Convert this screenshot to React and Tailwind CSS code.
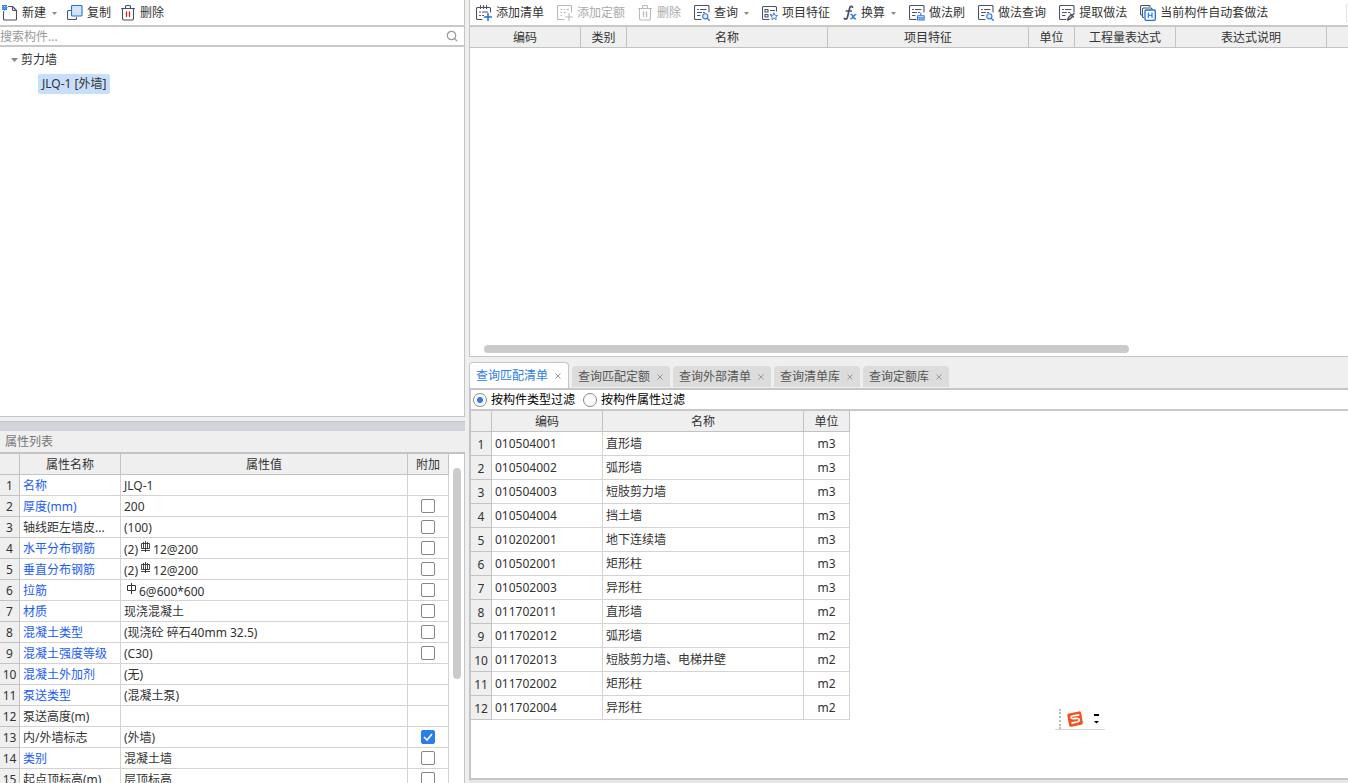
import { useState } from 'react';
import clsx from 'clsx';

const INK = '#4a5068';
const BLUE = '#2b7de9';

function Svg({ width = 16, children, className }) {
  return (
    <svg width={width} height="16" viewBox={`0 0 ${width} 16`} fill="none" stroke={INK} strokeWidth="1.1" strokeLinecap="round" strokeLinejoin="round" className={clsx('shrink-0', className)} aria-hidden="true">
      {children}
    </svg>
  );
}

function NewIcon() {
  return (
    <Svg>
      <path d="M6.500 1.500h4l4 4v8.500a1 1 0 0 1-1 1H2.500a1 1 0 0 1-1-1V6.500M10.500 1.500v3a1 1 0 0 0 1 1h3" />
      <path d="M.5.5l4 4M4.500.5l-4 4M2.500 0l2.500 2.500-2.500 2.500L0 2.500z" stroke={BLUE} />
    </Svg>
  );
}

function CopyIcon() {
  return (
    <Svg>
      <path d="M3.500 5.500h-2a1 1 0 0 0-1 1v7a1 1 0 0 0 1 1h7a1 1 0 0 0 1-1v-1" />
      <rect x="4.500" y=".5" width="10.500" height="10.500" rx="1" fill="#d3e4fb" stroke="#2672d8" />
    </Svg>
  );
}

function TrashIcon({ muted }) {
  return (
    <Svg width={15}>
      <path d="M.5 3.500h13M4.500 3.500v-2a1 1 0 0 1 1-1h3a1 1 0 0 1 1 1v2M1.500 3.500v10a1.500 1.500 0 0 0 1.500 1.500h8a1.500 1.500 0 0 0 1.500-1.500v-10" />
      <path d="M5.500 7v4.500M8.500 7v4.500" stroke={muted ? INK : '#d8232f'} strokeWidth="1.300" />
    </Svg>
  );
}

function AddListIcon() {
  return (
    <Svg>
      <path d="M6 14.500H1.500a1 1 0 0 1-1-1v-10a1 1 0 0 1 1-1h12a1 1 0 0 1 1 1V7M4.500.5v3M7.500.5v3M10.500.5v3M3.500 7h1M6.500 7h5M3.500 10.500h1M6.500 10.500h1" />
      <path d="M12 8.500v7M8.500 12h7" stroke="#1273dd" strokeWidth="1.500" />
    </Svg>
  );
}

function AddQuotaIcon() {
  return (
    <Svg>
      <path d="M7 14.500H1.500a1 1 0 0 1-1-1v-12a1 1 0 0 1 1-1h12a1 1 0 0 1 1 1V7" />
      <path d="M4 4.500h.5M7 4.500h.5M10 4.500h1.500M4 7.500h.5M7 7.500h1.500M4 10.500h.5M12 8.500v7M8.500 12h7" />
    </Svg>
  );
}

// shared sheet outline, the badge in the corner tells the commands apart
function Sheet({ children }) {
  return (
    <Svg>
      <path d="M7 14.500H1.500a1 1 0 0 1-1-1v-12a1 1 0 0 1 1-1h12.500a1 1 0 0 1 1 1V7" />
      <path d="M3.500 4.500h1M6.500 4.500h5.500M3.500 7.500h4M9.500 7.500h1M3.500 10.500h2.500" />
      {children}
    </Svg>
  );
}

function SheetSearchIcon() {
  return (
    <Sheet>
      <g stroke={BLUE}>
        <circle cx="11.300" cy="11.300" r="2.600" fill="#e3effd" />
        <path d="M13.400 13.400l1.900 1.900" strokeWidth="1.400" />
      </g>
    </Sheet>
  );
}

function SheetBrushIcon() {
  return (
    <Sheet>
      <path d="M11.800 8v2.500M8.500 10.700h6.700M8.500 12.800h6.700M8.500 10.700v4.300h6.700v-4.300M10.800 13v2M13 13v2" stroke={BLUE} />
    </Sheet>
  );
}

function SheetPickIcon() {
  return (
    <Sheet>
      <path d="M8.500 15l1-2.500 2.500-2.500 1.500 1.500-2.500 2.500zM11.500 9l3 3M13 10.500l2-2" strokeWidth="1.400" />
    </Sheet>
  );
}

function FeatureIcon() {
  return (
    <Svg>
      <path d="M14.500 6V2.500a1 1 0 0 0-1-1h-12a1 1 0 0 0-1 1v11a1 1 0 0 0 1 1H7" />
      <path d="M3 4.500h3v2.500H3zM3 9.500h3v2.500H3zM8.500 5.500h4M8.500 9.500h.5" />
      <path d="M12 8l1.100 2.200 2.400.3-1.700 1.700.4 2.400L12 13.500l-2.200 1.100.4-2.400-1.700-1.700 2.400-.3z" stroke={BLUE} fill="#e3effd" strokeWidth=".9" />
    </Svg>
  );
}

function FxIcon() {
  return (
    <Svg width={14}>
      <path d="M9.500 2.300C8.700.8 7.100 1 6.600 3.200L4.500 12c-.5 2.200-2 2.600-3.200 1.500M3.300 6h5" strokeWidth="1.700" />
      <path d="M8 9.500c2-.8 2 4.800 4.500 4.300M12.700 9.500c-1.700 0-2.800 4.300-4.900 4.300" stroke={BLUE} strokeWidth="1.500" />
    </Svg>
  );
}

function AutoIcon() {
  return (
    <Svg>
      <path d="M1.500 10a1 1 0 0 1-1-1V1.500a1 1 0 0 1 1-1H9a1 1 0 0 1 1 1" />
      <path d="M3.500 12.500a1 1 0 0 1-1-1V4a1 1 0 0 1 1-1H11a1 1 0 0 1 1 1" />
      <rect x="5" y="5" width="10.300" height="10.300" rx="1" fill="#fff" stroke="#1273dd" strokeWidth="1.300" />
      <path d="M8.300 8v4.500M12 8v4.500M8.300 10.200h3.700" stroke="#1273dd" />
    </Svg>
  );
}

function Caret({ className }) {
  return (
    <svg width="5" height="3" viewBox="0 0 5 3" className={clsx('shrink-0', className)} aria-hidden="true">
      <path d="M0 0h5L2.500 3z" fill="#8a8a8a" />
    </svg>
  );
}

// steel grade mark drawn in front of the bar diameter
function RebarMark({ grade }) {
  return (
    <svg width="11" height="12" viewBox="0 0 11 12" fill="none" stroke="#333" className="mx-0.5 inline-block align-[1px]" role="img" aria-label={grade === 3 ? 'HRB400' : 'HPB300'}>
      {grade === 3 ? (
        <path d="M1.500 2.500h8v5h-8zM5.500 0v11M3.500 1v7M7.500 1v7M1 9.500h9" strokeWidth=".9" />
      ) : (
        <path d="M1.500 2.500h8v5h-8zM5.500 0v11" />
      )}
    </svg>
  );
}

function ToolButton({ icon, label, menu, disabled }) {
  return (
    <button
      type="button"
      disabled={disabled}
      className="flex shrink-0 items-center gap-1 whitespace-nowrap text-[#333] disabled:text-[#aaa] disabled:[&_svg]:opacity-40"
    >
      {icon}
      {label}
      {menu && <Caret className="ml-0.5" />}
    </button>
  );
}

function HeadCell({ children }) {
  return <th scope="col" className="h-[21px] border-r border-b border-[#c3c3c3] bg-[#efefef] p-0 pt-0.5 text-center font-normal">{children}</th>;
}

function CheckBox({ label, value, onChange }) {
  return (
    <span className="mx-auto grid size-3.5 place-items-center">
      <input
        type="checkbox"
        aria-label={label}
        checked={value}
        onChange={onChange}
        className="col-start-1 row-start-1 size-3.5 appearance-none rounded-xs border border-[#868686] bg-white checked:border-[#2b7de9] checked:bg-[#2b7de9]"
      />
      {value && (
        <svg width="10" height="10" viewBox="0 0 10 10" className="pointer-events-none col-start-1 row-start-1" aria-hidden="true">
          <path d="M1 5l3 3 5-6" fill="none" stroke="#fff" strokeWidth="1.600" />
        </svg>
      )}
    </span>
  );
}

// attach: undefined = the cell has no check box
const PROPERTIES = [
  { name: '名称', value: 'JLQ-1', blue: true },
  { name: '厚度(mm)', value: '200', blue: true, attach: false },
  { name: '轴线距左墙皮...', value: '(100)', attach: false },
  { name: '水平分布钢筋', prefix: '(2)', grade: 3, value: '12@200', blue: true, attach: false },
  { name: '垂直分布钢筋', prefix: '(2)', grade: 3, value: '12@200', blue: true, attach: false },
  { name: '拉筋', grade: 1, value: '6@600*600', blue: true, attach: false },
  { name: '材质', value: '现浇混凝土', blue: true, attach: false },
  { name: '混凝土类型', value: '(现浇砼 碎石40mm 32.5)', blue: true, attach: false },
  { name: '混凝土强度等级', value: '(C30)', blue: true, attach: false },
  { name: '混凝土外加剂', value: '(无)', blue: true },
  { name: '泵送类型', value: '(混凝土泵)', blue: true },
  { name: '泵送高度(m)', value: '' },
  { name: '内/外墙标志', value: '(外墙)', attach: true },
  { name: '类别', value: '混凝土墙', blue: true, attach: false },
  { name: '起点顶标高(m)', value: '层顶标高', attach: false },
];

const ITEMS = [
  ['010504001', '直形墙', 'm3'],
  ['010504002', '弧形墙', 'm3'],
  ['010504003', '短肢剪力墙', 'm3'],
  ['010504004', '挡土墙', 'm3'],
  ['010202001', '地下连续墙', 'm3'],
  ['010502001', '矩形柱', 'm3'],
  ['010502003', '异形柱', 'm3'],
  ['011702011', '直形墙', 'm2'],
  ['011702012', '弧形墙', 'm2'],
  ['011702013', '短肢剪力墙、电梯井壁', 'm2'],
  ['011702002', '矩形柱', 'm2'],
  ['011702004', '异形柱', 'm2'],
];

const TABS = ['查询匹配清单', '查询匹配定额', '查询外部清单', '查询清单库', '查询定额库'];
const FILTERS = ['按构件类型过滤', '按构件属性过滤'];

function ComponentPanel() {
  return (
    <section className="flex min-h-0 grow-[416] basis-0 flex-col border-r border-b border-[#c5c5c5] bg-white">
      <div className="flex h-[25px] shrink-0 items-center gap-2.5 pt-px pl-0.5">
        <ToolButton icon={<NewIcon />} label="新建" menu />
        <ToolButton icon={<CopyIcon />} label="复制" />
        <ToolButton icon={<TrashIcon />} label="删除" />
      </div>
      <div className="flex h-[22px] shrink-0 items-center border-y-2 border-[#c8c8c8] pr-1.5">
        <input
          type="text"
          aria-label="搜索构件"
          placeholder="搜索构件..."
          className="h-[18px] min-w-0 flex-1 text-xs outline-none placeholder:text-[#999]"
        />
        <svg width="12" height="12" viewBox="0 0 12 12" fill="none" stroke="#999" strokeWidth="1.200" aria-hidden="true">
          <circle cx="5.500" cy="5.500" r="4.200" />
          <path d="M8.500 8.500l2.500 2.500" />
        </svg>
      </div>
      <ul className="flex-1 pt-px">
        <li>
          <div className="flex h-6 items-center gap-[3px] pl-[11px]">
            <svg width="7" height="4" viewBox="0 0 7 4" aria-hidden="true"><path d="M0 0h7L3.500 4z" fill="#868686" /></svg>
            剪力墙
          </div>
          <ul className="pl-[38px]">
            <li className="flex h-6 items-center">
              <button type="button" className="h-5 rounded-xs bg-[#c7dffb] px-1">JLQ-1 [外墙]</button>
            </li>
          </ul>
        </li>
      </ul>
    </section>
  );
}

function PropertyPanel() {
  const [rows, setRows] = useState(PROPERTIES);

  const toggle = (index) => {
    setRows(rows.map((row, i) => (i === index ? { ...row, attach: !row.attach } : row)));
  };

  return (
    <section className="flex min-h-0 grow-[362] basis-0 flex-col overflow-hidden pt-1">
      <div className="h-2.5 shrink-0 border-t border-[#c5c5c9] bg-[#d3d4da]" />
      <h2 className="h-[23px] shrink-0 border-b-2 border-[#c3c3c7] pl-[5px] leading-[21px] text-[#777]">属性列表</h2>
      <div className="flex min-h-0 flex-1 overflow-hidden border-r border-[#c5c5c5] bg-white">
        <div className="min-w-0 flex-1">
          <table className="w-full table-fixed border-separate border-spacing-0">
            <colgroup>
              <col className="w-5" />
              <col className="w-[101px]" />
              <col />
              <col className="w-[41px]" />
            </colgroup>
            <thead>
              <tr>
                <HeadCell />
                <HeadCell>属性名称</HeadCell>
                <HeadCell>属性值</HeadCell>
                <HeadCell>附加</HeadCell>
              </tr>
            </thead>
            <tbody>
              {rows.map((row, i) => (
                <tr key={row.name}>
                  <th scope="row" className="h-[21px] border-r border-b border-[#c3c3c3] bg-[#efefef] p-0 pt-0.5 text-center font-normal">{i + 1}</th>
                  <td className={clsx('truncate border-r border-b border-[#d3d3d3] p-0 pt-0.5 pl-[3px]', row.blue && 'text-[#1a5cf5]')}>{row.name}</td>
                  <td className="truncate border-r border-b border-[#d3d3d3] p-0 pt-0.5 pl-[3px]">
                    {row.prefix}
                    {row.grade && <RebarMark grade={row.grade} />}
                    {row.value}
                  </td>
                  <td className="border-r border-b border-[#d3d3d3] p-0">
                    {row.attach !== undefined && (
                      <CheckBox label={`附加 ${row.name}`} value={row.attach} onChange={() => toggle(i)} />
                    )}
                  </td>
                </tr>
              ))}
            </tbody>
          </table>
        </div>
        <div className="w-[15px] shrink-0 pt-3.5 pl-1">
          <div className="h-[211px] w-2 rounded-full bg-[#cbcbcb]" />
        </div>
      </div>
    </section>
  );
}

function MethodPanel() {
  return (
    <section className="flex min-h-0 flex-1 flex-col border-b border-l border-[#c5c5c5] bg-white">
      <div className="flex h-[25px] shrink-0 items-center gap-[13px] overflow-hidden pt-px pl-1.5">
        <ToolButton icon={<AddListIcon />} label="添加清单" />
        <ToolButton icon={<AddQuotaIcon />} label="添加定额" disabled />
        <ToolButton icon={<TrashIcon muted />} label="删除" disabled />
        <ToolButton icon={<SheetSearchIcon />} label="查询" menu />
        <ToolButton icon={<FeatureIcon />} label="项目特征" />
        <ToolButton icon={<FxIcon />} label="换算" menu />
        <ToolButton icon={<SheetBrushIcon />} label="做法刷" />
        <ToolButton icon={<SheetSearchIcon />} label="做法查询" />
        <ToolButton icon={<SheetPickIcon />} label="提取做法" />
        <ToolButton icon={<AutoIcon />} label="当前构件自动套做法" />
        <span className="ml-auto h-[18px] w-0.5 rounded-l-xs border-y border-l border-[#e4e4e4]" />
      </div>
      <table className="w-full table-fixed border-separate border-spacing-0 border-t-2 border-[#c8c8c8]">
        <colgroup>
          <col className="w-[111px]" />
          <col className="w-[46px]" />
          <col className="w-[201px]" />
          <col className="w-[201px]" />
          <col className="w-[46px]" />
          <col className="w-[101px]" />
          <col className="w-[151px]" />
          <col />
        </colgroup>
        <thead>
          <tr>
            <HeadCell>编码</HeadCell>
            <HeadCell>类别</HeadCell>
            <HeadCell>名称</HeadCell>
            <HeadCell>项目特征</HeadCell>
            <HeadCell>单位</HeadCell>
            <HeadCell>工程量表达式</HeadCell>
            <HeadCell>表达式说明</HeadCell>
            <th className="border-b border-[#c3c3c3] bg-[#efefef] p-0" />
          </tr>
        </thead>
      </table>
      <div className="mt-auto pb-[3px] pl-3.5">
        <div className="h-2 w-[645px] max-w-full rounded-full bg-[#cbcbcb]" />
      </div>
    </section>
  );
}

function QueryPanel() {
  const [tab, setTab] = useState(TABS[0]);
  const [filter, setFilter] = useState(FILTERS[0]);

  return (
    <section className="shrink-0 pt-[5px]">
      <div className="flex h-[26px] items-end gap-[3px]" role="tablist">
        {TABS.map((name) => (
          <div
            key={name}
            className={clsx(
              'flex items-center gap-1.5 rounded-t px-1.5',
              name === tab ? 'h-[26px] border border-b-0 border-[#c3c5cb] bg-white pt-px text-[#2b7de9]' : 'mb-px h-[21px] bg-[#dcdcdc] text-[#555]'
            )}
          >
            <button type="button" role="tab" aria-selected={name === tab} onClick={() => setTab(name)}>{name}</button>
            <button type="button" aria-label={`关闭 ${name}`} className="flex size-2 items-center justify-center">
              <svg width="6" height="6" viewBox="0 0 6 6" stroke="#999" aria-hidden="true"><path d="M.5.5l5 5M5.500.5l-5 5" /></svg>
            </button>
          </div>
        ))}
      </div>
      <div className="border-y-2 border-l-2 border-[#c3c5c7] bg-white pb-[58px]">
        <div className="flex h-[21px] items-center gap-2 border-b-2 border-[#c8c8c8] pl-0.5 text-black">
          {FILTERS.map((name) => (
            <label key={name} className="flex items-center gap-1">
              <input
                type="radio"
                name="filter"
                checked={filter === name}
                onChange={() => setFilter(name)}
                className="grid size-3.5 appearance-none place-items-center rounded-full border border-[#868686] bg-white checked:before:size-1.5 checked:before:rounded-full checked:before:bg-[#2b7de9]"
              />
              {name}
            </label>
          ))}
        </div>
        <table className="table-fixed border-separate border-spacing-0">
          <colgroup>
            <col className="w-[21px]" />
            <col className="w-[111px]" />
            <col className="w-[201px]" />
            <col className="w-[46px]" />
          </colgroup>
          <thead>
            <tr>
              <HeadCell />
              <HeadCell>编码</HeadCell>
              <HeadCell>名称</HeadCell>
              <HeadCell>单位</HeadCell>
            </tr>
          </thead>
          <tbody>
            {ITEMS.map(([code, name, unit], i) => (
              <tr key={code}>
                <th scope="row" className="h-6 border-r border-b border-[#c3c3c3] bg-[#efefef] p-0 pt-0.5 text-center font-normal">{i + 1}</th>
                <td className="border-r border-b border-[#d3d3d3] p-0 pl-[3px]">{code}</td>
                <td className="border-r border-b border-[#d3d3d3] p-0 pl-[3px]">{name}</td>
                <td className="border-r border-b border-[#d3d3d3] p-0 text-center">{unit}</td>
              </tr>
            ))}
          </tbody>
        </table>
      </div>
      <div className="h-[3px] bg-[#e6e6e6]" />
    </section>
  );
}

// floating input method bar
function ImeBar() {
  return (
    <div className="absolute right-[243px] bottom-[53px] flex h-[22px] w-[50px] items-center border-b border-[#d8d8d8] pl-1">
      <span className="h-5 border-l-2 border-dotted border-[#bbb]" />
      <svg width="16" height="16" viewBox="0 0 16 16" className="ml-1.5" role="img" aria-label="S">
        <path d="M1.800 2.600L11.800.4q2-.4 2.400 1.500l1.600 9.600q.3 1.900-1.600 2.300L4.500 15.800q-2 .3-2.400-1.600L.4 4.900q-.3-1.900 1.400-2.300z" fill="#f4511e" />
        <path d="M12.300 3.800L6 4.900q-2.200.5-1.800 1.900.4 1.100 2.300.9l3.500-.3q2-.1 2.300 1.200.3 1.600-2 2.200l-5.900 1.300" fill="none" stroke="#fff" strokeWidth="1.700" />
      </svg>
      <svg width="7" height="11" viewBox="0 0 7 11" className="ml-2.5" aria-hidden="true">
        <path d="M1 1h5v2H1zM1 8h5L3.500 10.500z" fill="#000" />
      </svg>
    </div>
  );
}

export default function App() {
  return (
    <div className="relative flex h-screen w-full overflow-hidden bg-[#efefef] font-['Noto_Sans','Noto_Sans_CJK_SC',sans-serif] text-xs text-[#333]">
      <aside className="flex w-[465px] shrink-0 flex-col">
        <ComponentPanel />
        <PropertyPanel />
      </aside>
      <main className="ml-1 flex min-w-0 flex-1 flex-col">
        <MethodPanel />
        <QueryPanel />
      </main>
      <ImeBar />
    </div>
  );
}
